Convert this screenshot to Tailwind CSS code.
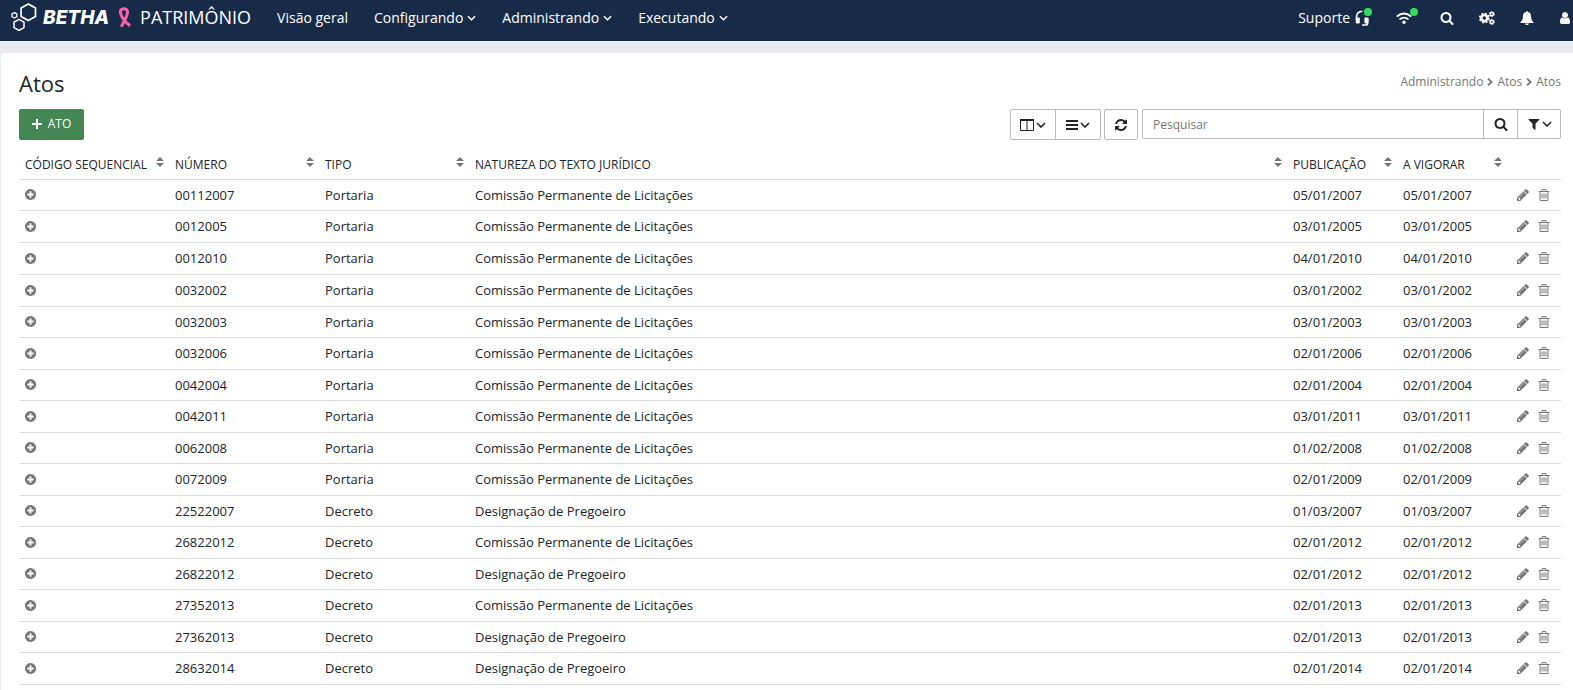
<!DOCTYPE html>
<html lang="pt-BR">
<head>
<meta charset="utf-8">
<title>Patrimônio - Atos</title>
<script src="https://cdn.jsdelivr.net/npm/@tailwindcss/browser@4"></script>
</head>
<body class="min-h-screen overflow-x-hidden bg-[#ebecf0] font-['Open_Sans',sans-serif] text-[13px] leading-[18px] text-[#212529]">
<svg class="hidden" aria-hidden="true">
  <symbol id="search" viewBox="0 0 1792 1792"><path d="M1216 832q0-185-131.5-316.5t-316.5-131.5-316.5 131.5-131.5 316.5 131.5 316.5 316.5 131.5 316.5-131.5 131.5-316.5zm512 832q0 52-38 90t-90 38q-54 0-90-38l-343-342q-179 124-399 124-143 0-273.5-55.5t-225-150-150-225-55.5-273.5 55.5-273.5 150-225 225-150 273.5-55.5 273.5 55.5 225 150 150 225 55.500 273.500q0 220-124 399l343 343q37 37 37 90z"/></symbol>
  <symbol id="refresh" viewBox="0 0 1792 1792"><path d="M1639 1056q0 5-1 7-64 268-268 434.5t-478 166.5q-146 0-282.5-55t-243.5-157l-129 129q-19 19-45 19t-45-19-19-45v-448q0-26 19-45t45-19h448q26 0 45 19t19 45-19 45l-137 137q71 66 161 102t187 36q134 0 250-65t186-179q11-17 53-117 8-23 30-23h192q13 0 22.5 9.5t9.5 22.5zm25-800v448q0 26-19 45t-45 19h-448q-26 0-45-19t-19-45 19-45l138-138q-148-137-349-137-134 0-250 65t-186 179q-11 17-53 117-8 23-30 23h-199q-13 0-22.5-9.5t-9.5-22.5v-7q65-268 270-434.5t480-166.5q146 0 284 55.5t245 156.5l130-129q19-19 45-19t45 19 19 45z"/></symbol>
  <symbol id="filter" viewBox="0 0 1792 1792"><path d="M1595 295q17 41-14 70l-493 493v742q0 42-39 59-13 5-25 5-27 0-45-19l-256-256q-19-19-19-45v-486l-493-493q-31-29-14-70 17-39 59-39h1280q42 0 59 39z"/></symbol>
  <symbol id="pencil" viewBox="0 0 1792 1792"><path d="M491 1536l91-91-235-235-91 91v107h128v128h107zm523-928q0-22-22-22-10 0-17 7l-542 542q-7 7-7 17 0 22 22 22 10 0 17-7l542-542q7-7 7-17zm-54-192l416 416-832 832h-416v-416zm683 96q0 53-37 90l-166 166-416-416 166-165q36-38 90-38 53 0 91 38l235 234q37 39 37 91z"/></symbol>
  <symbol id="trash" viewBox="0 0 1792 1792"><path d="M704 736v576q0 14-9 23t-23 9h-64q-14 0-23-9t-9-23v-576q0-14 9-23t23-9h64q14 0 23 9t9 23zm256 0v576q0 14-9 23t-23 9h-64q-14 0-23-9t-9-23v-576q0-14 9-23t23-9h64q14 0 23 9t9 23zm256 0v576q0 14-9 23t-23 9h-64q-14 0-23-9t-9-23v-576q0-14 9-23t23-9h64q14 0 23 9t9 23zm128 724v-948h-896v948q0 22 7 40.5t14.5 27 10.5 8.5h832q3 0 10.5-8.5t14.5-27 7-40.5zm-672-1076h448l-48-117q-7-9-17-11h-317q-10 2-17 11zm928 32v64q0 14-9 23t-23 9h-96v948q0 83-47 143.5t-113 60.5h-832q-66 0-113-58.5t-47-141.5v-952h-96q-14 0-23-9t-9-23v-64q0-14 9-23t23-9h309l70-167q15-37 54-63t79-26h320q40 0 79 26t54 63l70 167h309q14 0 23 9t9 23z"/></symbol>
  <symbol id="plus-circle" viewBox="0 0 1792 1792"><path d="M1344 960v-128q0-26-19-45t-45-19h-256v-256q0-26-19-45t-45-19h-128q-26 0-45 19t-19 45v256h-256q-26 0-45 19t-19 45v128q0 26 19 45t45 19h256v256q0 26 19 45t45 19h128q26 0 45-19t19-45v-256h256q26 0 45-19t19-45zm320-64q0 209-103 385.5t-279.5 279.5-385.5 103-385.5-103-279.5-279.5-103-385.5 103-385.5 279.5-279.5 385.5-103 385.5 103 279.5 279.5 103 385.5z"/></symbol>
  <symbol id="user" viewBox="0 0 1792 1792"><path d="M1536 1399q0 109-62.5 187t-150.5 78h-854q-88 0-150.5-78t-62.5-187q0-85 8.5-160.5t31.5-152 58.5-131 94-89 134.5-34.5q131 128 313 128t313-128q76 0 134.5 34.5t94 89 58.5 131 31.5 152 8.5 160.5zm-256-887q0 159-112.5 271.5t-271.5 112.5-271.5-112.5-112.5-271.5 112.5-271.5 271.5-112.5 271.5 112.5 112.5 271.5z"/></symbol>
  <symbol id="bell" viewBox="0 0 14 14"><path d="M7 0c.6 0 1 .5.9 1.100C9.800 1.500 11 3 11 5c0 3 .8 4.700 2.700 6.200 0 .5-.4.8-.9.8H1.200c-.5 0-.9-.3-.9-.8C2.200 9.700 3 8 3 5c0-2 1.200-3.500 3.100-3.900C6 .5 6.400 0 7 0zM5.200 12.400h3.600C8.800 13.300 8 14 7 14s-1.800-.7-1.800-1.600z"/></symbol>
  <symbol id="cogs" viewBox="0 0 16 14"><g fill="none" stroke="currentColor"><circle cx="5.300" cy="7" r="3" stroke-width="2.400"/><circle cx="5.300" cy="7" r="4.600" stroke-width="1.600" stroke-dasharray="2.110 1.500"/><circle cx="12.800" cy="3.100" r="1.600" stroke-width="1.500"/><circle cx="12.800" cy="3.100" r="2.600" stroke-width="1" stroke-dasharray="1.450 1.270"/><circle cx="12.800" cy="10.900" r="1.600" stroke-width="1.500"/><circle cx="12.800" cy="10.900" r="2.600" stroke-width="1" stroke-dasharray="1.450 1.270"/></g></symbol>
  <symbol id="down" viewBox="0 0 10 6"><path d="M1 1l4 4 4-4" fill="none" stroke="currentColor" stroke-width="1.600"/></symbol>
  <symbol id="right" viewBox="0 0 6 8"><path d="M1 .7L4.600 4 1 7.300" fill="none" stroke="currentColor" stroke-width="1.800"/></symbol>
  <symbol id="sort" viewBox="0 0 8 10"><path d="M0 4l4-4 4 4zM0 6h8l-4 4z"/></symbol>
</svg>

<header class="flex h-[41px] items-center bg-[#172b48] pb-[6px] text-white">
  <a href="#" class="ml-[11px] flex items-center pb-[2px]" aria-label="Betha Patrimônio">
    <svg class="mr-[6px] h-7 w-[26px]" viewBox="0 0 26 28" fill="none" stroke="#fff" stroke-linejoin="round"><path d="M17.300 1l7.200 4.100v8.300l-7.200 4.100-7.200-4.100V5.100z" stroke-width="1.700"/><path d="M8 16.400l5 2.800v5.400l-5 2.800-5-2.800v-5.400z" stroke-width="1.500"/><path d="M3.400 9.600l2.400 1.300v2.800L3.400 15 1 13.700v-2.800z" stroke-width="1.300"/></svg>
    <span class="pt-[2px] font-[Inter,sans-serif] text-[19px] leading-6 font-extrabold italic">BETHA</span>
    <svg class="mt-[2px] mr-2 ml-[9px] h-[21px] w-[14px]" viewBox="0 0 14 21" fill="none" stroke="#ff5fa8" stroke-width="3"><path d="M3.300 19.800L8 10.500C9.600 7 10 5.500 9.200 3.600 8.200 1 3.700 1 2.600 3.600c-.8 2.100.2 4.400 2 7.400 1.800 3 3.900 5.200 7.400 7.700"/></svg>
    <span class="text-[18px] leading-6">PATRIMÔNIO</span>
  </a>
  <nav class="ml-[26px] flex items-center gap-[26px] text-[14px]" aria-label="Principal">
    <a href="#">Visão geral</a>
    <button class="flex items-center gap-1">Configurando <svg class="h-[6px] w-[9px]"><use href="#down"/></svg></button>
    <button class="flex items-center gap-1">Administrando <svg class="h-[6px] w-[9px]"><use href="#down"/></svg></button>
    <button class="flex items-center gap-1">Executando <svg class="h-[6px] w-[9px]"><use href="#down"/></svg></button>
  </nav>
  <div class="ml-auto flex items-center fill-current text-[14px]">
    <button class="relative flex items-center gap-[5px]">Suporte
      <svg class="size-4" viewBox="0 0 16 16"><path d="M1.500 10V7q0-5.500 6-5.800M12.600 8v5.500q0 1.500-1.500 1.500H7" fill="none" stroke="currentColor" stroke-width="1.600"/><rect x=".8" y="7.500" width="4" height="6" rx="1"/><rect x="9.400" y="7.500" width="4" height="6" rx="1"/></svg>
      <span class="absolute -top-px -right-px size-2 rounded-full bg-[#34db5c]"></span></button>
    <button class="relative ml-[25px]" aria-label="Conexão"><svg class="h-3 w-4" viewBox="0 0 16 12"><path d="M.8 4.500q7.200-6 14.400 0M3.500 7.300q4.500-3.500 9 0" fill="none" stroke="currentColor" stroke-width="1.700"/><circle cx="8" cy="10.200" r="1.700"/></svg><span class="absolute -top-1 -right-1.5 size-2 rounded-full bg-[#34db5c]"></span></button>
    <button class="ml-7" aria-label="Pesquisar no sistema"><svg class="size-3.5"><use href="#search"/></svg></button>
    <button class="ml-[25px]" aria-label="Configurações"><svg class="h-3.5 w-4"><use href="#cogs"/></svg></button>
    <button class="ml-[25px]" aria-label="Notificações"><svg class="size-3.5"><use href="#bell"/></svg></button>
    <button class="mr-px ml-6" aria-label="Usuário"><svg class="size-3.5"><use href="#user"/></svg></button>
  </div>
</header>

<main class="mt-3 ml-px rounded-tl-sm bg-white pr-3 pb-[5px] pl-[18px]">
  <div class="flex items-center justify-between pt-[17px]">
    <h1 class="text-[22px] leading-[26px]">Atos</h1>
    <nav class="flex items-center gap-1 pb-[2px] text-[12px] text-[#777]" aria-label="Trilha">
      <a href="#">Administrando</a><svg class="h-2 w-[6px]"><use href="#right"/></svg>
      <a href="#">Atos</a><svg class="h-2 w-[6px]"><use href="#right"/></svg>
      <span>Atos</span>
    </nav>
  </div>
  <div class="mt-[13px] flex items-start justify-between fill-current">
    <button class="flex h-[31px] w-[65px] items-center justify-center gap-1.5 rounded-xs bg-[#448654] pb-[2px] text-[12px] text-white"><svg class="size-[10px]" viewBox="0 0 10 10"><path d="M4 0h2v4h4v2H6v4H4V6H0V4h4z"/></svg>ATO</button>
    <div class="flex items-start">
      <div class="flex h-[31px] divide-x divide-[#bbb] rounded-xs border border-[#bbb]">
        <button class="flex w-[45px] items-center justify-center gap-0.5" aria-label="Colunas"><svg class="h-3 w-[14px]" viewBox="0 0 14 12"><path d="M.5 1h13v10.500H.5zM7 1v10.500" fill="none" stroke="currentColor"/><path d="M0 0h14v2H0z"/></svg><svg class="h-[6px] w-[10px]"><use href="#down"/></svg></button>
        <button class="flex w-11 items-center justify-center gap-0.5" aria-label="Densidade"><svg class="h-[10px] w-3" viewBox="0 0 12 10"><path d="M0 0h12v2H0zM0 4h12v2H0zM0 8h12v2H0z"/></svg><svg class="h-[6px] w-[10px]"><use href="#down"/></svg></button>
      </div>
      <button class="ml-[3px] flex h-[31px] w-[34px] items-center justify-center rounded-xs border border-[#bbb]" aria-label="Atualizar"><svg class="size-3.5"><use href="#refresh"/></svg></button>
      <form class="ml-1 flex h-[30px] divide-x divide-[#bbb] rounded-xs border border-[#bbb]">
        <input type="text" class="w-[341px] pt-[2px] pl-[10px] text-[12px] outline-none placeholder:text-[#777]" placeholder="Pesquisar" aria-label="Pesquisar">
        <button type="button" class="flex w-[34px] items-center justify-center" aria-label="Buscar"><svg class="size-3.5"><use href="#search"/></svg></button>
        <button type="button" class="flex w-[42px] items-center justify-center gap-px" aria-label="Filtros"><svg class="size-3.5"><use href="#filter"/></svg><svg class="h-[6px] w-[10px]"><use href="#down"/></svg></button>
      </form>
    </div>
  </div>

  <table class="mt-2 w-full table-fixed border-collapse text-left">
    <colgroup><col class="w-[150px]"><col class="w-[150px]"><col class="w-[150px]"><col><col class="w-[110px]"><col class="w-[110px]"><col class="w-[54px]"></colgroup>
    <thead class="text-[12px]"><tr id="head" class="h-[31px] border-b border-[#ddd]"></tr></thead>
    <tbody id="rows"></tbody>
  </table>
</main>

<script>
const heads = ['CÓDIGO SEQUENCIAL', 'NÚMERO', 'TIPO', 'NATUREZA DO TEXTO JURÍDICO', 'PUBLICAÇÃO', 'A VIGORAR'];
document.getElementById('head').innerHTML = heads.map(h =>
  `<th class="pt-[3px] pr-[5px] pl-1.5 font-normal whitespace-nowrap"><div class="flex items-center justify-between"><span>${h}</span><svg class="mb-[6px] h-[10px] w-2 shrink-0 fill-[#777]"><use href="#sort"/></svg></div></th>`).join('') + '<td></td>';
const C = 'Comissão Permanente de Licitações', D = 'Designação de Pregoeiro';
const rows = [
  ['00112007', 'Portaria', C, '05/01/2007'], ['0012005', 'Portaria', C, '03/01/2005'],
  ['0012010', 'Portaria', C, '04/01/2010'], ['0032002', 'Portaria', C, '03/01/2002'],
  ['0032003', 'Portaria', C, '03/01/2003'], ['0032006', 'Portaria', C, '02/01/2006'],
  ['0042004', 'Portaria', C, '02/01/2004'], ['0042011', 'Portaria', C, '03/01/2011'],
  ['0062008', 'Portaria', C, '01/02/2008'], ['0072009', 'Portaria', C, '02/01/2009'],
  ['22522007', 'Decreto', D, '01/03/2007'], ['26822012', 'Decreto', C, '02/01/2012'],
  ['26822012', 'Decreto', D, '02/01/2012'], ['27352013', 'Decreto', C, '02/01/2013'],
  ['27362013', 'Decreto', D, '02/01/2013'], ['28632014', 'Decreto', D, '02/01/2014']];
document.getElementById('rows').innerHTML = rows.map(([n, t, d, date], i) => `
  <tr class="border-b border-[#ddd] ${i % 2 || i === 2 ? 'h-8' : 'h-[31px]'}">
    <td class="px-[5px]"><button class="block" aria-label="Expandir ${n}"><svg class="size-[13px] fill-[#777]"><use href="#plus-circle"/></svg></button></td>
    <td class="px-1.5">${n}</td><td class="px-1.5">${t}</td><td class="px-1.5">${d}</td>
    <td class="px-1.5">${date}</td><td class="px-1.5">${date}</td>
    <td><div class="flex justify-end gap-[7px] pr-[10px]"><button aria-label="Editar ${n}"><svg class="size-[14px] fill-[#777]"><use href="#pencil"/></svg></button><button aria-label="Excluir ${n}"><svg class="size-[14px] fill-[#777]"><use href="#trash"/></svg></button></div></td>
  </tr>`).join('');
</script>
</body>
</html>
